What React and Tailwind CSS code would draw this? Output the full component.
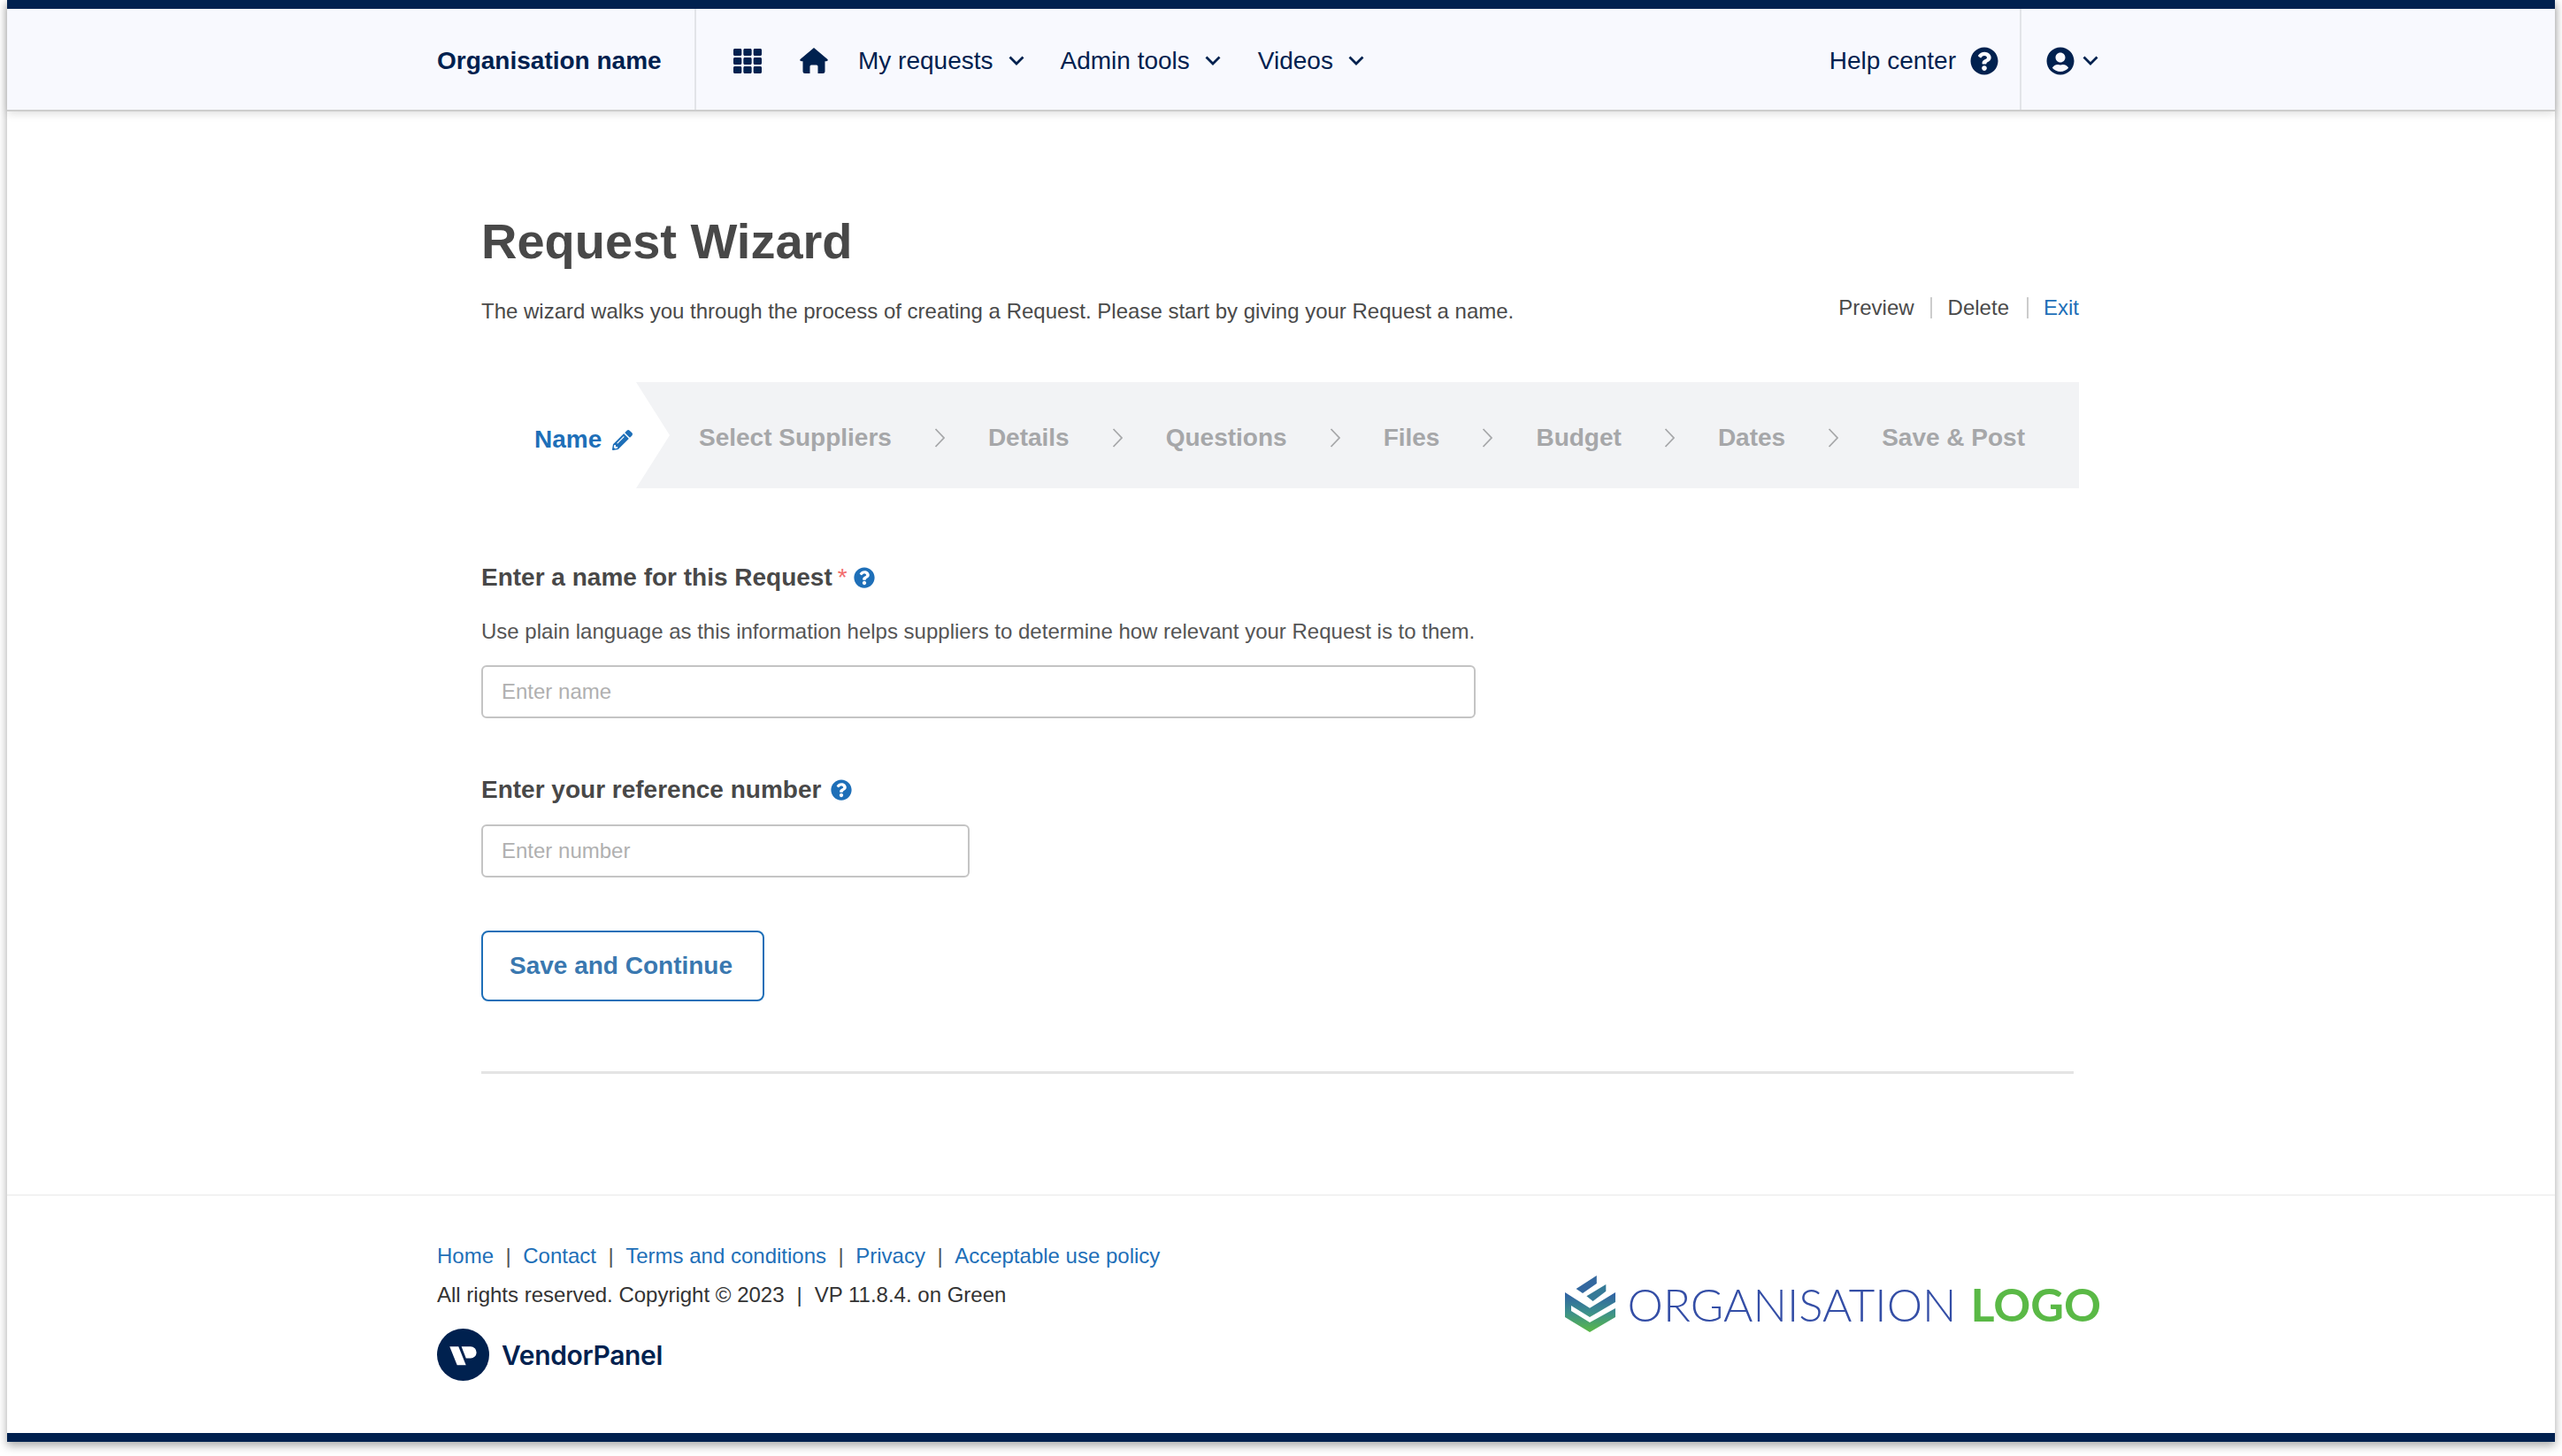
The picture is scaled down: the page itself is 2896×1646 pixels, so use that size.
import React from "react";
import { FaTh, FaQuestionCircle, FaUserCircle, FaPencilAlt } from "react-icons/fa";

const steps = ["Select Suppliers", "Details", "Questions", "Files", "Budget", "Dates", "Save & Post"];
const footerLinks = ["Home", "Contact", "Terms and conditions", "Privacy", "Acceptable use policy"];

const Chevron = ({ className = "" }) => (
  <svg className={className} width="18" height="11" viewBox="0 0 18 11" fill="none" stroke="currentColor" strokeWidth="2.8">
    <polyline points="1.5,1.5 9,9 16.5,1.5" />
  </svg>
);

const HomeIcon = () => (
  <svg width="32" height="29" viewBox="0 0 32 29" fill="#00214f">
    <path d="M16 0 L31.4 13 Q32.6 15 30 15.2 H28.5 V26.5 Q28.5 29 26 29 H20.5 V21 Q20.5 19.5 19 19.5 H13 Q11.5 19.5 11.5 21 V29 H6 Q3.5 29 3.5 26.5 V15.2 H2 Q-.6 15 .6 13 Z" />
  </svg>
);

const NavItem = ({ label, className = "" }) => (
  <div className={`flex items-center gap-[17px] ${className}`}>
    <span>{label}</span>
    <Chevron />
  </div>
);

const VendorLogo = () => (
  <div className="flex items-center gap-[14px]">
    <svg width="59" height="59" viewBox="0 0 59 59">
      <circle cx="29.5" cy="29.5" r="29.5" fill="#00214f" />
      <path d="M14.3 20.3 H24.3 L32.7 41.3 H22.7 Z" fill="#fff" />
      <path d="M27.6 20.3 H38 a6.6 6.6 0 0 1 0 13.2 H32.8 Z" fill="#fff" />
    </svg>
    <span className="font-['Inter',sans-serif] font-semibold text-[30px] leading-none tracking-[-0.35px] text-[#00214f]">VendorPanel</span>
  </div>
);

const OrgLogo = () => (
  <div className="flex items-center">
    <svg width="57" height="64" viewBox="0 0 57 64">
      <defs>
        <linearGradient id="orgGrad" x1="0" y1="0" x2="0" y2="1">
          <stop offset="0" stopColor="#2f5fa5" />
          <stop offset="0.5" stopColor="#3c8f8c" />
          <stop offset="1" stopColor="#5ab946" />
        </linearGradient>
      </defs>
      <path d="M12.6 15 L35.8 0 V9 L20 20 Z" fill="#33689f" />
      <path d="M24.4 23.3 L46.3 10 V17.7 L31.6 29 Z" fill="#357a97" />
      <path fill="url(#orgGrad)" d="M0 19 L28 36.7 L57 19 V30 L28 47 L7 34 V40 L28 53 L57 37 V47 L28 64 L0 47 Z" />
    </svg>
    <div className="ml-[14px] flex items-center font-['Lato',sans-serif] leading-none whitespace-nowrap">
      <span className="text-[51px] font-light text-[#344ea6]">ORGANISATION</span>
      <span className="ml-[16px] text-[52px] font-bold text-[#5ab946]">LOGO</span>
    </div>
  </div>
);

const App = () => {
  return (
    <div className="h-[1646px] bg-white px-2 font-['Liberation_Sans',Arial,sans-serif] overflow-hidden">
      <div className="flex h-[1630px] flex-col bg-white shadow-[0_4px_10px_rgba(0,0,0,0.35)]">
        <header className="relative z-10 flex h-[126px] border-t-[10px] border-b-2 border-t-[#00214f] border-b-[#cdcdcd] bg-[#f8f9fe] text-[28px] text-[#00214f] shadow-[0_2px_10px_rgba(0,0,0,0.14)]">
          <div className="flex w-[779px] items-center border-r-2 border-[#e2e4e8] pl-[486px] pt-[3px] font-bold">
            Organisation name
          </div>
          <div className="flex flex-1 items-center pl-[42px] pt-[3px]">
            <FaTh size={32} />
            <div className="ml-[43px] mr-[34px]">
              <HomeIcon />
            </div>
            <NavItem label="My requests" className="mr-[41px]" />
            <NavItem label="Admin tools" className="mr-[42px]" />
            <NavItem label="Videos" />
            <div className="ml-auto flex items-center gap-4 pr-6">
              <span>Help center</span>
              <FaQuestionCircle size={32} />
            </div>
          </div>
          <div className="flex w-[605px] items-center gap-[9px] border-l-2 border-[#e2e4e8] pl-[28px] pt-[3px]">
            <FaUserCircle size={32} />
            <Chevron />
          </div>
        </header>

        <main className="pl-[536px] pt-[115px]">
          <div className="w-[1806px] text-[#484848]">
            <h1 className="text-[56px] leading-[64px] font-bold">Request Wizard</h1>
            <div className="mt-[31px] flex items-start justify-between text-[24px] leading-[32px] text-[#4a4a4a]">
              <p>The wizard walks you through the process of creating a Request. Please start by giving your Request a name.</p>
              <div className="-mt-[4px] flex items-center">
                <span>Preview</span>
                <span className="ml-[18px] mr-[18px] h-6 w-[2px] bg-[#ccc]"></span>
                <span>Delete</span>
                <span className="ml-5 mr-[17px] h-6 w-[2px] bg-[#ccc]"></span>
                <span className="text-[#1e6fb8]">Exit</span>
              </div>
            </div>

            <div className="mt-[64px] flex h-[120px] text-[28px] font-bold">
              <div className="flex w-[175px] items-center gap-3 pl-[60px] pt-[10px] text-[#1e6fb8]">
                <span>Name</span>
                <FaPencilAlt size={23} />
              </div>
              <div className="flex flex-1 items-center gap-[48px] bg-[#f2f3f5] pl-[71px] pt-[5px] text-[#a6a7a9] [clip-path:polygon(0_0,100%_0,100%_100%,0_100%,38px_50%)]">
                {steps.map((step, i) => (
                  <React.Fragment key={step}>
                    <span>{step}</span>
                    {i < steps.length - 1 && (
                      <svg width="13" height="22" viewBox="0 0 13 22" fill="none" stroke="#a6a7a9" strokeWidth="1.8">
                        <polyline points="1.5,1 11,11 1.5,21" />
                      </svg>
                    )}
                  </React.Fragment>
                ))}
              </div>
            </div>

            <div className="mt-[83px] flex items-center text-[28px] leading-[36px] font-bold">
              <span>Enter a name for this Request</span>
              <span className="ml-[6px] font-normal text-[#f26d6d]">*</span>
              <FaQuestionCircle size={24} className="ml-[7px] text-[#1e6fb8]" />
            </div>
            <p className="mt-[27px] text-[24px] leading-[32px] text-[#555]">
              Use plain language as this information helps suppliers to determine how relevant your Request is to them.
            </p>
            <input
              placeholder="Enter name"
              className="mt-[22px] block h-[60px] w-[1124px] rounded-[6px] border-2 border-[#c4c4c4] bg-white px-[21px] text-[24px] placeholder:text-[#b0b0b0]"
            />

            <div className="mt-[63px] flex items-center text-[28px] leading-[36px] font-bold">
              <span>Enter your reference number</span>
              <FaQuestionCircle size={24} className="ml-[11px] text-[#1e6fb8]" />
            </div>
            <input
              placeholder="Enter number"
              className="mt-[21px] block h-[60px] w-[552px] rounded-[6px] border-2 border-[#c4c4c4] bg-white px-[21px] text-[24px] placeholder:text-[#b0b0b0]"
            />

            <button className="mt-[60px] block h-[80px] w-[320px] rounded-[8px] border-2 border-[#1e6fb8] bg-white text-left pl-[30px] text-[28px] font-bold text-[#3a78b0]">
              Save and Continue
            </button>

            <div className="mt-[79px] h-[3px] w-[1800px] bg-[#e4e4e4]"></div>
          </div>
        </main>

        <footer className="mt-[136px] flex flex-1 flex-col border-t-2 border-[#f2f2f2]">
          <div className="flex flex-1 items-start justify-between pl-[486px] pr-[513px]">
            <div className="pt-[52px] text-[24px] leading-[32px] text-[#333]">
              <div className="flex">
                {footerLinks.map((link, i) => (
                  <React.Fragment key={link}>
                    {i > 0 && <span className="mx-[13.5px] text-[#555]">|</span>}
                    <span className="text-[#1e6fb8]">{link}</span>
                  </React.Fragment>
                ))}
              </div>
              <div className="mt-3">
                All rights reserved. Copyright © 2023<span className="mx-[14px]">|</span>VP 11.8.4. on Green
              </div>
              <div className="mt-[22px]">
                <VendorLogo />
              </div>
            </div>
            <div className="pt-[90px]">
              <OrgLogo />
            </div>
          </div>
          <div className="h-[10px] bg-[#00214f]"></div>
        </footer>
      </div>
    </div>
  );
};

export default App;
